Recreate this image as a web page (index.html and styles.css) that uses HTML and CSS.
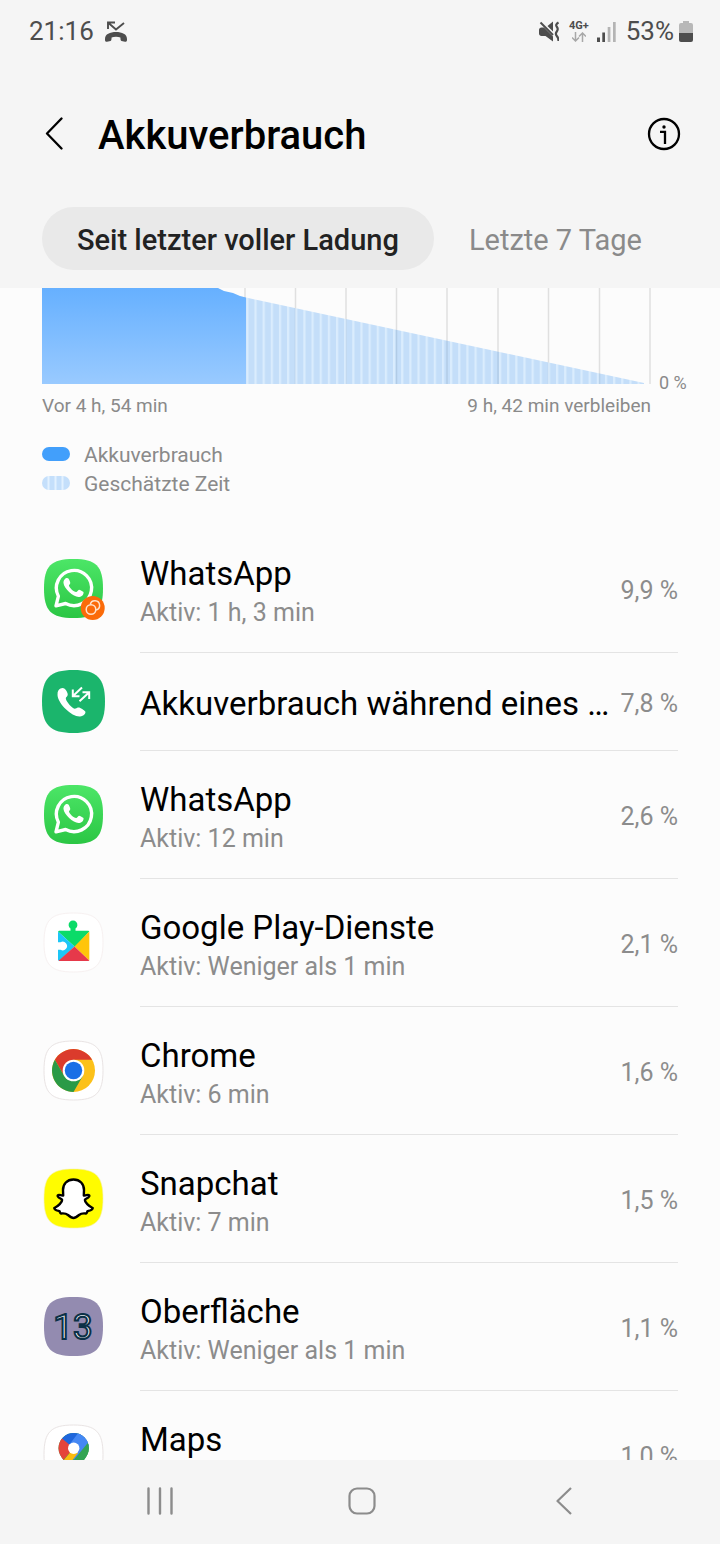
FILE: index.html
```html
<!DOCTYPE html>
<html lang="de">
<head>
<meta charset="utf-8">
<meta name="viewport" content="width=device-width, initial-scale=1">
<title>Akkuverbrauch</title>
<link rel="stylesheet" href="styles.css">
</head>
<body>
<svg class="defs" width="0" height="0" aria-hidden="true">
  <defs>
    <linearGradient id="wa-green" x1="0" y1="0" x2="0" y2="1">
      <stop offset="0" stop-color="#4ce667"/><stop offset="1" stop-color="#2bc644"/>
    </linearGradient>
    <path id="squircle" d="M31.500 2C54 2 61 9 61 31.500S54 61 31.500 61 2 54 2 31.500 9 2 31.500 2Z"/>
    <g id="whatsapp">
      <use href="#squircle" fill="url(#wa-green)"/>
      <path d="M14 48.800L16.400 39.200A17.600 17.600 0 1 1 23.600 46.500Z" fill="none" stroke="#fff" stroke-width="3.400" stroke-linejoin="round"/>
      <path d="M25 21C26.500 21 27 22 27.700 24C28.500 26 28.700 26.300 27 28.200C26.500 29 30 34 34 35C35 35.300 36 33 37 32.700C38 32.700 41 34.500 41.500 35C42 38 39 40 36.500 40C31 40 22 31.500 21.500 26C21.300 23 23.500 21 25 21Z" fill="#fff"/>
    </g>
  </defs>
</svg>

<header class="top">
  <div class="status">
    <time class="clock">21:16</time>
    <svg class="missed" width="22" height="21" viewBox="0 0 22 21" role="img" aria-label="Verpasster Anruf">
      <path d="M3 8V1.500H10M3.500 2L11 8.500L19 2" fill="none" stroke="#4d4d4d" stroke-width="1.900"/>
      <path d="M0 18C0 13 5 11 11 11S22 13 22 18V19C22 20.500 21 21 20 20.700L16.500 20C15.500 19.500 15.500 18 15.400 16.500C13 15.500 9 15.500 6.600 16.500C6.500 18 6.500 19.500 5.500 20L2 20.700C1 21 0 20.500 0 19Z" fill="#4d4d4d"/>
    </svg>
    <div class="status-right">
      <svg class="mute" width="20" height="21" viewBox="0 0 20 21" role="img" aria-label="Stumm">
        <path d="M0 9C0 7.500 1 6.500 2.500 6.500H5L14 15.500V20.500L6.500 15H2.500C1 15 0 14 0 12.500ZM8.500 5L14 .5V10.500Z" fill="#4d4d4d"/>
        <path d="M1.500 1.500L14 14" stroke="#4d4d4d" stroke-width="2"/>
        <path d="M19.500 1.500Q16 3.500 17.800 5.800T17.800 10.500T17.800 15T19.500 20" fill="none" stroke="#4d4d4d" stroke-width="2.200"/>
      </svg>
      <div class="network">
        <span>4G+</span>
        <svg width="14" height="10" viewBox="0 0 14 10" aria-hidden="true"><path d="M3.500 0V9M0 5.500L3.500 9L7 5.500M10.500 10V1M7 4.500L10.500 1L14 4.500" fill="none" stroke="#a8a8a8" stroke-width="1.500"/></svg>
      </div>
      <svg class="signal" width="19" height="21" viewBox="0 0 19 21" role="img" aria-label="Signal">
        <path d="M0 16.500H3V21H0ZM5.300 11.500H8V21H5.300Z" fill="#4d4d4d"/>
        <path d="M10.700 6H13.400V21H10.700ZM16 1H18.700V21H16Z" fill="#b4b4b4"/>
      </svg>
      <span class="level">53%</span>
      <svg width="14" height="21" viewBox="0 0 14 21" aria-hidden="true">
        <path d="M4 0H10V2H12Q14 2 14 4V12H0V4Q0 2 2 2H4Z" fill="#b8b8b8"/>
        <path d="M0 12H14V19Q14 21 12 21H2Q0 21 0 19Z" fill="#4d4d4d"/>
      </svg>
    </div>
  </div>
  <div class="title-bar">
    <button class="icon-btn" type="button" aria-label="Zurück">
      <svg width="18" height="33" viewBox="0 0 18 33"><path d="M16.500 1.500L2 16.500L16.500 31.500" fill="none" stroke="#000" stroke-width="2.300" stroke-linecap="round" stroke-linejoin="round"/></svg>
    </button>
    <h1 class="title">Akkuverbrauch</h1>
    <button class="icon-btn" type="button" aria-label="Info">
      <svg width="34" height="34" viewBox="0 0 34 34"><circle cx="17" cy="17" r="15" fill="none" stroke="#000" stroke-width="2.300"/><circle cx="17" cy="10" r="1.700"/><path d="M13 14.800H18V27" fill="none" stroke="#000" stroke-width="2.300"/></svg>
    </button>
  </div>
  <nav class="tabs">
    <button class="tab tab-active" type="button">Seit letzter voller Ladung</button>
    <button class="tab" type="button">Letzte 7 Tage</button>
  </nav>
</header>

<main class="content">
  <section class="usage">
    <div class="plot">
      <svg class="chart" viewBox="0 0 609 96" preserveAspectRatio="none" role="img" aria-label="Akkuverlauf">
        <defs>
          <linearGradient id="used" x1="0" y1="0" x2="0" y2="1"><stop offset="0" stop-color="#66b0ff"/><stop offset="1" stop-color="#99caff"/></linearGradient>
          <pattern id="stripes" x="204.300" y="0" width="8.150" height="96" patternUnits="userSpaceOnUse"><path d="M0 0H8.150V96H0Z" fill="#4fa0f5" fill-opacity=".32"/><path d="M0 0H2.200V96H0Z" fill="#e4f3ff" fill-opacity=".7"/></pattern>
        </defs>
        <path d="M203 0V96M253.500 0V96M304 0V96M354.500 0V96M405 0V96M456 0V96M506.500 0V96M557.500 0V96M608 0V96" stroke="#e0e0e0" stroke-width="1.500"/>
        <path d="M0 0H176L182 3L191 5L198 8L204 9.500V96H0Z" fill="url(#used)"/>
        <path d="M204 9.500L602 95V96H204Z" fill="url(#stripes)"/>
      </svg>
      <span class="zero">0 %</span>
    </div>
    <div class="range"><span>Vor 4 h, 54 min</span><span>9 h, 42 min verbleiben</span></div>
    <ul class="legend">
      <li><svg width="28" height="18" viewBox="0 0 28 18" aria-hidden="true"><rect y="0" width="28" height="14" rx="7" fill="#429ffb"/></svg>Akkuverbrauch</li>
      <li><svg width="28" height="18" viewBox="0 0 28 18" aria-hidden="true"><rect y="0" width="28" height="14" rx="7" fill="#c4dffb"/><path d="M6.500 0V14M13.500 0V14M20.500 0V14" stroke="#e2f1ff" stroke-width="2"/></svg>Geschätzte Zeit</li>
    </ul>
  </section>

  <ul class="apps">
    <li class="app">
      <svg class="app-icon" viewBox="0 0 64 64" aria-hidden="true"><use href="#whatsapp"/><circle cx="50.700" cy="51" r="12" fill="#fb6b0a"/><g fill="none" stroke="#ffe3cd" stroke-width="1.500"><circle cx="49" cy="52.500" r="4.800"/><path d="M48.300 47.500A4.700 4.700 0 1 1 54 53"/></g></svg>
      <div class="body"><div class="text"><h2>WhatsApp</h2><p>Aktiv: 1 h, 3 min</p></div><span class="pct">9,9 %</span></div>
    </li>
    <li class="app app-short">
      <svg class="app-icon" viewBox="0 0 64 64" aria-hidden="true"><path d="M31.500 0C55 0 63 8 63 31.500S55 63 31.500 63 0 55 0 31.500 8 0 31.500 0Z" fill="#1bb56c"/><path d="M18.500 18.500C21 17 23 18.500 24.500 21C26 24 26.500 25.500 24 27.500C23 29 26 34 31 38C33 39.500 34.500 38 36 37.500C38 37 42 40 43.300 41.500C44 43.500 42 46 38 46.500C30 47 16 34 15.500 25C15.300 21 17 19 18.500 18.500Z" fill="#fff"/><path d="M40 17.500L31 26M30.800 19.500V26.200H37.500M37.500 31.300L47 22.500M40.500 22.200H47.200V29" fill="none" stroke="#fff" stroke-width="2"/></svg>
      <div class="body"><div class="text"><h2>Akkuverbrauch während eines …</h2></div><span class="pct">7,8 %</span></div>
    </li>
    <li class="app">
      <svg class="app-icon" viewBox="0 0 64 64" aria-hidden="true"><use href="#whatsapp"/></svg>
      <div class="body"><div class="text"><h2>WhatsApp</h2><p>Aktiv: 12 min</p></div><span class="pct">2,6 %</span></div>
    </li>
    <li class="app">
      <svg class="app-icon" viewBox="0 0 64 64" aria-hidden="true"><use href="#squircle" fill="#fff" stroke="#f7f1f1"/><path d="M17 19.700H28.500V17.500A4.400 4.400 0 1 1 33.500 17.500V19.700H46.500L47.300 20.500L33 36L16 20.500Z" fill="#0bdb68"/><path d="M16 20.500L32.500 35.500L17 50L16 49V38.700H18.500A4.300 4.300 0 1 0 18.500 31.300H16Z" fill="#1cc6f7"/><path d="M47.300 20.500V49.500L32.500 35.500Z" fill="#ffc50a"/><path d="M32.500 35.500L47.300 49.500L46.500 50H17L16.500 49.800Z" fill="#e6394a"/></svg>
      <div class="body"><div class="text"><h2>Google Play-Dienste</h2><p>Aktiv: Weniger als 1 min</p></div><span class="pct">2,1 %</span></div>
    </li>
    <li class="app">
      <svg class="app-icon" viewBox="0 0 64 64" aria-hidden="true"><use href="#squircle" fill="#fff" stroke="#e9e4e4"/><circle cx="31.500" cy="31.500" r="21.500" fill="#fcc119"/><path d="M12.900 20.750A21.500 21.500 0 0 1 50.100 20.750H31.500V31.500L22.200 36.900Z" fill="#db3b2c"/><path d="M12.900 20.750A21.500 21.500 0 0 0 31.500 53L40.800 36.900L31.500 31.500L22.200 36.900Z" fill="#2a9a47"/><circle cx="31.500" cy="31.500" r="10.800" fill="#fff"/><circle cx="31.500" cy="31.500" r="8.700" fill="#1a6fe6"/></svg>
      <div class="body"><div class="text"><h2>Chrome</h2><p>Aktiv: 6 min</p></div><span class="pct">1,6 %</span></div>
    </li>
    <li class="app">
      <svg class="app-icon" viewBox="0 0 64 64" aria-hidden="true"><use href="#squircle" fill="#fffc00" stroke="#f3efb0" stroke-width=".6"/><path d="M31.500 12.500C25 12.500 21 17 21 23L21.200 28.500C19 29 17 26.800 15.700 28.500C15 30.500 19 31.500 20 32.500C20.500 35 16 39.500 12.300 41C12 43 16 43.700 17.500 44.200C18 45 18 46.300 19 46.500C21 46.200 23.500 46 26 48C29 50.500 30 51 31.500 51C33 51 34 50.500 37 48C39.500 46 42 46.200 44 46.500C45 46.300 45 45 45.500 44.200C47 43.700 51 43 50.700 41C47 39.500 42.500 35 43 32.500C44 31.500 48 30.500 47.300 28.500C46 26.800 44 29 41.800 28.500L42 23C42 17 38 12.500 31.500 12.500Z" fill="#fff" stroke="#000" stroke-width="2.400" stroke-linejoin="round"/></svg>
      <div class="body"><div class="text"><h2>Snapchat</h2><p>Aktiv: 7 min</p></div><span class="pct">1,5 %</span></div>
    </li>
    <li class="app">
      <svg class="app-icon" viewBox="0 0 64 64" aria-hidden="true"><use href="#squircle" fill="#938bb0"/><text class="release" x="31" y="44" text-anchor="middle">13</text></svg>
      <div class="body"><div class="text"><h2>Oberfläche</h2><p>Aktiv: Weniger als 1 min</p></div><span class="pct">1,1 %</span></div>
    </li>
    <li class="app">
      <svg class="app-icon" viewBox="0 0 64 64" aria-hidden="true"><defs><clipPath id="pin"><path d="M31.700 10A15.200 15.200 0 0 1 46.900 25.200C46.900 36 35 41 31.700 54C28.500 41 16.500 36 16.500 25.200A15.200 15.200 0 0 1 31.700 10Z"/></clipPath></defs><use href="#squircle" fill="#fff" stroke="#e9e4e4"/><g clip-path="url(#pin)"><path d="M10 5H55V55H10Z" fill="#33a453"/><path d="M10 5H55L31.700 25.200L22 20Z" fill="#1f66dc"/><path d="M37 9L50 20L31.700 41V25.200L27 22Z" fill="#4588f4"/><path d="M10 10L20 15.500L31.700 25.200L17 42H10Z" fill="#e5443a"/><path d="M47 19L31.700 37V25.200L45 10Z" fill="#4588f4"/><path d="M47.500 18L17 55H55V18Z" fill="#33a453"/><path d="M31.700 25.200L16 44V50L24 45.500L36 30Z" fill="#fbbb10"/></g><circle cx="31.700" cy="25.200" r="5.700" fill="#fff"/></svg>
      <div class="body"><div class="text"><h2>Maps</h2><p>&nbsp;</p></div><span class="pct">1,0 %</span></div>
    </li>
  </ul>
</main>

<footer class="sys-nav">
  <button class="icon-btn" type="button" aria-label="Letzte Apps"><svg width="26" height="28" viewBox="0 0 26 28"><path d="M1.500 1.500V26.500M13 1.500V26.500M24.500 1.500V26.500" stroke="#8c8c8c" stroke-width="2.400" stroke-linecap="round"/></svg></button>
  <button class="icon-btn" type="button" aria-label="Startseite"><svg width="28" height="28" viewBox="0 0 28 28"><rect x="1.500" y="1.500" width="25" height="25" rx="7.500" fill="none" stroke="#8c8c8c" stroke-width="2.200"/></svg></button>
  <button class="icon-btn" type="button" aria-label="Zurück"><svg width="16" height="28" viewBox="0 0 16 28"><path d="M15 1L1.500 14L15 27" fill="none" stroke="#8c8c8c" stroke-width="2.200" stroke-linejoin="round"/></svg></button>
</footer>
</body>
</html>
```

FILE: styles.css
```css
* { box-sizing: border-box; }

body {
  margin: 0;
  height: 100vh;
  display: flex;
  flex-direction: column;
  overflow: hidden;
  background: #fcfcfc;
  color: #000;
  font-family: Roboto, "Liberation Sans", sans-serif;
}

h1, h2, p, ul { margin: 0; padding: 0; }
ul { list-style: none; }
svg { display: block; flex: none; }
button { border: 0; background: none; font: inherit; color: inherit; padding: 0; }

.defs { position: absolute; }

.top { background: #f5f5f5; padding-bottom: 18px; }

.status {
  display: flex;
  align-items: center;
  height: 62px;
  padding: 0 27px 0 29px;
  font-size: 26px;
  color: #4d4d4d;
}
.missed { margin-left: 11px; }
.status-right { display: flex; align-items: center; margin-left: auto; }
.network {
  display: flex;
  flex-direction: column;
  align-items: center;
  margin: 0 8px 0 10px;
  padding-bottom: 1px;
  font-size: 11px;
  line-height: 13px;
  font-weight: 700;
}
.signal { margin-right: 10px; }
.level { margin-right: 5px; }

.title-bar {
  display: flex;
  align-items: center;
  height: 145px;
  padding: 0 39px 2px 45px;
}
.title {
  flex: 1;
  padding: 5px 0 0 35px;
  font-size: 40px;
  line-height: 48px;
  font-weight: 500;
}
.icon-btn { display: flex; align-items: center; justify-content: center; }

.tabs { display: flex; padding: 0 42px; }
.tab {
  height: 63px;
  padding: 2px 35px 0;
  border-radius: 32px;
  font-size: 29px;
  color: #8a8a8a;
  white-space: nowrap;
}
.tab-active { background: #e9e9e9; color: #222; font-weight: 500; }

.content { flex: 1; min-height: 0; overflow: hidden; }

.usage { padding-left: 42px; color: #8a8a8a; }
.plot { display: flex; align-items: flex-end; }
.chart { flex: 1; min-width: 0; height: 96px; margin-bottom: 10px; }
.zero { width: 69px; padding-left: 8px; font-size: 18px; line-height: 22px; white-space: nowrap; }
.range {
  display: flex;
  justify-content: space-between;
  padding-right: 69px;
  font-size: 19px;
  line-height: 24px;
}
.legend { padding: 23px 0 26px; font-size: 21px; line-height: 29px; }
.legend li { display: flex; align-items: center; gap: 14px; }

.app { display: flex; align-items: center; gap: 34px; padding: 0 42px; }
.app-icon { width: 64px; height: 64px; }
.body {
  flex: 1;
  min-width: 0;
  min-height: 128px;
  display: flex;
  align-items: center;
  gap: 10px;
  padding-top: 6px;
  border-bottom: 1px solid #e4e4e4;
}
.app-short .body { min-height: 98px; padding-top: 4px; }
.text { flex: 1; min-width: 0; }
.text h2 {
  font-size: 33px;
  line-height: 42px;
  font-weight: 400;
  white-space: nowrap;
  overflow: hidden;
  text-overflow: ellipsis;
}
.text p { font-size: 25px; line-height: 36px; color: #8c8c8c; }
.pct { padding-bottom: 2px; font-size: 25px; color: #8c8c8c; white-space: nowrap; }
.app-short .pct { padding-bottom: 0; }

.release {
  font-size: 35px;
  font-weight: 400;
  fill: #f2f6fa;
  stroke: #0b3046;
  stroke-width: 2px;
}

.sys-nav {
  display: grid;
  grid-template-columns: repeat(3, 1fr);
  height: 84px;
  padding: 0 55px 2px 59px;
  background: #f5f5f5;
}
```
